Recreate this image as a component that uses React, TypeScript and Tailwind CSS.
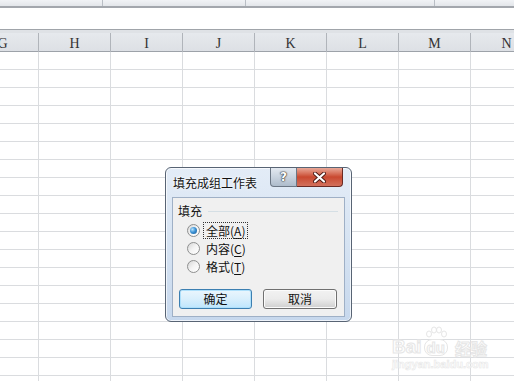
import React from 'react'

const cols = ['G', 'H', 'I', 'J', 'K', 'L', 'M', 'N']
const rows = Array.from({ length: 19 }, (_, i) => i)

function Radio({ checked }: { checked?: boolean }) {
  return (
    <span className="relative flex h-[13px] w-[13px] shrink-0 items-center justify-center rounded-full border border-[#8e8f8f] bg-gradient-to-br from-[#d6d6d6] via-[#f4f4f4] to-[#ffffff]">
      {checked && (
        <span className="h-[7px] w-[7px] rounded-full bg-[radial-gradient(circle_at_35%_35%,#b9e3fb_0%,#3d93d6_45%,#14558f_100%)]" />
      )}
    </span>
  )
}

function Option({ label, hot, checked }: { label: string; hot: string; checked?: boolean }) {
  return (
    <div className="flex h-[18px] items-center pl-[14px]">
      <Radio checked={checked} />
      <span
        className={
          'ml-[4px] px-[2px] leading-[15px] ' +
          (checked ? 'outline outline-1 outline-dotted outline-[#333]' : '')
        }
      >
        {label}(<span className="underline underline-offset-2">{hot}</span>)
      </span>
    </div>
  )
}

function Dialog() {
  return (
    <div className="absolute left-[165px] top-[167px] flex h-[155px] w-[187px] flex-col rounded-[6px] border border-[#586474] bg-gradient-to-b from-[#e3ecf7] via-[#d6e3f2] to-[#c7d8ed] font-['Noto_Sans_CJK_SC',sans-serif] text-[12px] text-[#111] shadow-[0_0_0_1px_rgba(255,255,255,0.7)_inset]">
      {/* title bar */}
      <div className="flex h-[29px] items-start">
        <span className="ml-[7px] mt-[7px] leading-[16px] [text-shadow:0_0_4px_#fff,0_0_2px_#fff]">填充成组工作表</span>
        <div className="ml-auto mr-[8px] flex">
          <div className="flex h-[19px] w-[27px] items-center justify-center rounded-bl-[4px] border border-t-0 border-[#6b7684] bg-gradient-to-b from-[#e3e9f0] via-[#c9d3df] to-[#aebccb]">
            <span className="font-['DejaVu_Sans',sans-serif] text-[12px] font-bold leading-none text-white [text-shadow:0_0_1px_#333,0_0_1px_#333,0_0_2px_#333]">?</span>
          </div>
          <div className="flex h-[19px] w-[46px] items-center justify-center rounded-br-[4px] border border-l-0 border-t-0 border-[#6a2a24] bg-gradient-to-b from-[#e8a898] via-[#c9482f] to-[#d2705c]">
            <svg width="13" height="11" viewBox="0 0 13 11">
              <path d="M2 1.5 L11 9.5 M11 1.5 L2 9.5" stroke="#4a1a14" strokeWidth="4" strokeLinecap="round" />
              <path d="M2 1.5 L11 9.5 M11 1.5 L2 9.5" stroke="#fff" strokeWidth="2.2" strokeLinecap="round" />
            </svg>
          </div>
        </div>
      </div>

      {/* client area */}
      <div className="mx-[6px] mb-[4px] flex h-[120px] flex-col border border-[#9fb0c6] bg-[#f0f0f0]">
        <div className="mt-[5px] flex h-[16px] items-center pl-[5px] pr-[6px]">
          <span className="leading-[16px]">填充</span>
          <span className="ml-[6px] h-px flex-1 bg-[#d5dfe5]" />
        </div>
        <div className="mt-[2px] flex flex-col">
          <Option label="全部" hot="A" checked />
          <Option label="内容" hot="C" />
          <Option label="格式" hot="T" />
        </div>
        <div className="mt-[14px] flex gap-[11px] pl-[6px]">
          <button className="flex h-[20px] w-[73px] items-center justify-center rounded-[3px] border border-[#3c7fb1] bg-gradient-to-b from-[#eaf6fd] via-[#d9effc] to-[#bee6fd] shadow-[inset_0_0_0_1px_#aee0fb] leading-none">
            确定
          </button>
          <button className="flex h-[20px] w-[74px] items-center justify-center rounded-[3px] border border-[#707070] bg-gradient-to-b from-[#f2f2f2] via-[#ebebeb] to-[#cfcfcf] shadow-[inset_0_0_0_1px_#fbfbfb] leading-none">
            取消
          </button>
        </div>
      </div>
    </div>
  )
}

export default function App() {
  return (
    <div className="relative h-[381px] w-[514px] overflow-hidden bg-white">
      {/* ribbon remnant */}
      <div className="flex h-[6px] bg-gradient-to-b from-[#f1f3f6] to-[#e3e6ea]">
        <div className="w-[103px] border-r border-[#b9bec5]" />
        <div className="w-[143px] border-r border-[#b9bec5]" />
        <div className="w-[189px] border-r border-[#b9bec5]" />
      </div>
      <div className="h-[2px] bg-[#a3a7ad]" />
      {/* formula bar */}
      <div className="h-[21px] bg-white" />
      <div className="h-px bg-[#a0a4aa]" />
      <div className="h-[3px] bg-[#dfe2e6]" />

      {/* sheet */}
      <div className="ml-[-33px] flex flex-col">
        <div className="grid h-[19px] grid-cols-[repeat(8,72px)] border-b border-[#9da2a9] bg-gradient-to-b from-[#e6e9ed] to-[#dde0e5]">
          {cols.map((c) => (
            <div
              key={c}
              className="flex items-center justify-center border-r border-[#b0b4ba] font-['Liberation_Serif',serif] text-[14px] text-[#333]"
            >
              {c}
            </div>
          ))}
        </div>
        {rows.map((r) => (
          <div key={r} className="grid h-[18px] grid-cols-[repeat(8,72px)] border-b border-[#dadcdf]">
            {cols.map((c) => (
              <div key={c} className="border-r border-[#dadcdf]" />
            ))}
          </div>
        ))}
      </div>

      <Dialog />

      {/* watermark */}
      <div className="pointer-events-none absolute left-[392px] top-[326px] flex flex-col items-start">
        <div className="flex items-end font-['Liberation_Sans',sans-serif] font-bold leading-none [-webkit-text-stroke:1px_#e6e6e6]">
          <span className="text-[19px] text-white/70">Bai</span>
          <span className="relative ml-[2px] flex flex-col items-center">
            <svg width="24" height="12" viewBox="0 0 24 12" className="mb-[1px]">
              <g fill="none" stroke="#e6e6e6" strokeWidth="1">
                <ellipse cx="5" cy="8" rx="2.5" ry="3" />
                <ellipse cx="10" cy="4" rx="2.5" ry="3" />
                <ellipse cx="15" cy="4" rx="2.5" ry="3" />
                <ellipse cx="20" cy="8" rx="2.5" ry="3" />
              </g>
            </svg>
            <span className="rounded-[8px] border border-[#e6e6e6] px-[2px] text-[15px] text-white/70">du</span>
          </span>
          <span className="ml-[7px] font-['Noto_Sans_CJK_SC',sans-serif] text-[16px] text-white/70">经验</span>
        </div>
        <span className="mt-[3px] font-['Liberation_Sans',sans-serif] text-[11px] font-bold leading-none text-white/70 [-webkit-text-stroke:0.6px_#e8e8e8]">
          jingyan.baidu.com
        </span>
      </div>
    </div>
  )
}
